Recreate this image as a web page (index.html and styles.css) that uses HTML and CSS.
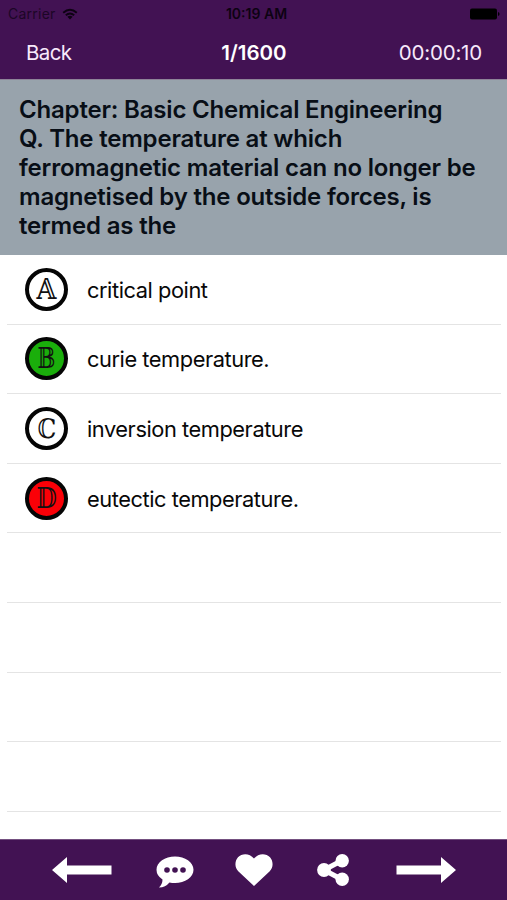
FILE: index.html
```
<!DOCTYPE html>
<html lang="en">
<head>
<meta charset="utf-8">
<title>Quiz</title>
<link rel="stylesheet" href="styles.css">
</head>
<body>
<div class="app">
  <header class="top">
    <div class="status">
      <div class="carrier"><span>Carrier</span>
        <svg class="wifi" viewBox="0 0 16 12" width="16" height="12" fill="none" stroke="currentColor" stroke-width="1.9"><path d="M1.2 4.7Q8-1.3 14.8 4.7M3.8 7.3Q8 3.7 12.2 7.3"/><path d="M5.4 8.7Q8 6.6 10.6 8.7L8 11.6Z" fill="currentColor" stroke="none"/></svg>
      </div>
      <span class="clock">10:19 AM</span>
      <svg class="battery" viewBox="0 0 30 12" width="30" height="12" fill="currentColor"><rect x="0" y="0.5" width="27" height="11" rx="2"/><path d="M28 4q1.6.5 1.6 2T28 8z"/></svg>
    </div>
    <nav class="nav">
      <span class="back">Back</span>
      <span class="count">1/1600</span>
      <span class="timer">00:00:10</span>
    </nav>
  </header>
  <h1 class="question">
    <span>Chapter: Basic Chemical Engineering</span>
    <span>Q. The temperature at which</span>
    <span>ferromagnetic material can no longer be</span>
    <span>magnetised by the outside forces, is</span>
    <span>termed as the</span>
  </h1>
  <ul class="answers">
    <li><b class="badge"><i>𝔸</i></b><span>critical point</span></li>
    <li><b class="badge right"><i class="narrow">𝔹</i></b><span>curie temperature.</span></li>
    <li><b class="badge"><i class="slim">ℂ</i></b><span>inversion temperature</span></li>
    <li><b class="badge wrong"><i class="slim">𝔻</i></b><span>eutectic temperature.</span></li>
    <li></li>
    <li></li>
    <li></li>
    <li></li>
  </ul>
  <footer class="toolbar">
    <svg viewBox="0 0 60 28" width="60" height="28"><path d="M0 14 15 1V9.5H59.5V18.5H15V27Z"/></svg>
    <svg class="chat" viewBox="0 0 38 32" width="38" height="32"><path d="M19 .5C29 .5 37.5 6.3 37.5 13.7S29 27 19 27q-3 0-5.5-.6Q9.500 31.300 3 31.500 6.500 28 6.500 23.500.5 19.500.5 13.700C.5 6.300 9 .5 19 .5Z"/><g class="dots"><circle cx="11" cy="14" r="2.800"/><circle cx="19" cy="14" r="2.800"/><circle cx="27" cy="14" r="2.800"/></g></svg>
    <svg class="heart" viewBox="0 0 38 32" width="38" height="32"><path d="M19 32 3.500 17.500C-1 13 0 6.500 3 3.300 7-1 14.500-1 19 4.500 23.500-1 31-1 35 3.300 38 6.500 39 13 34.500 17.500Z"/></svg>
    <svg class="share" viewBox="0 0 32 32" width="32" height="32"><path d="M25 6.500 7 16 25 25.500" fill="none" stroke="#fff" stroke-width="5"/><circle cx="7" cy="16" r="6.900"/><circle cx="25.200" cy="6.700" r="6.700"/><circle cx="25.200" cy="25.300" r="6.700"/></svg>
    <svg class="next" viewBox="0 0 60 28" width="60" height="28"><path d="M60 14 45 1V9.500H.5V18.500H45V27Z"/></svg>
  </footer>
</div>
</body>
</html>
```
FILE: styles.css
```
* { box-sizing: border-box; }
body { margin: 0; background: #fff; font-family: Inter, "Liberation Sans", sans-serif; color: #080808; }
.app { width: 507px; height: 900px; display: flex; flex-direction: column; overflow: hidden; }
span { white-space: nowrap; }
.top { height: 79px; flex: none; background: #421253; color: #f7e9fb; }
.status { height: 27px; padding: 0 7px 0 8px; display: grid; grid-template-columns: 1fr auto 1fr; align-items: center; color: #0d0212; font-size: 14px; }
.carrier { display: flex; align-items: center; gap: 6px; color: #1c0626; letter-spacing: .25px; }
.wifi { color: #0d0212; }
.clock { padding-left: 5px; font-weight: 600; font-size: 14px; }
.battery { justify-self: end; color: #000; }
.nav { height: 50px; padding: 0 25px 0 26px; display: grid; grid-template-columns: 1fr auto 1fr; align-items: center; font-size: 20.5px; }
.back { letter-spacing: -.6px; }
.count { font-weight: 600; color: #fff; }
.timer { justify-self: end; letter-spacing: -.2px; }
.question { flex: none; height: 176px; margin: 0; padding: 15px 19px 0; background: #98a3ac; border-top: 1px solid #8d8398; font-size: 24px; font-weight: 600; line-height: 29px; letter-spacing: -.19px; color: #080e16; }
.question span { display: block; }
.answers { flex: 1; min-height: 0; overflow: hidden; list-style: none; margin: 0; padding: 0 6px 0 7px; }
.answers li { height: 69.6px; padding: 1px 0 0 18px; display: flex; align-items: center; gap: 19px; border-bottom: 1px solid #e4e4e4; font-size: 21.8px; letter-spacing: -.44px; }
.badge { width: 43px; height: 43px; margin-top: -1px; border: 4px solid #050505; border-radius: 50%; display: flex; align-items: center; justify-content: center; font-family: "DejaVu Serif", "DejaVu Sans", serif; font-size: 27px; font-weight: 400; line-height: 1; letter-spacing: 0; color: #111; }
.badge i { font-style: normal; transform: scaleX(.95); }
.badge .narrow { transform: scaleX(.78); }
.badge .slim { transform: scaleX(.87); }
.right { background: #1aae0b; }
.wrong { background: #fb0007; }
.toolbar { flex: none; height: 61px; padding: 0 50px 1px 52px; background: #421253; border-top: 1px solid #745080; display: flex; align-items: center; fill: #fff; }
.chat { margin: 4px 0 0 44px; }
.dots { fill: #421253; }
.heart { margin-left: 41px; }
.share { margin-left: 44px; }
.next { margin-left: 47px; }
```
